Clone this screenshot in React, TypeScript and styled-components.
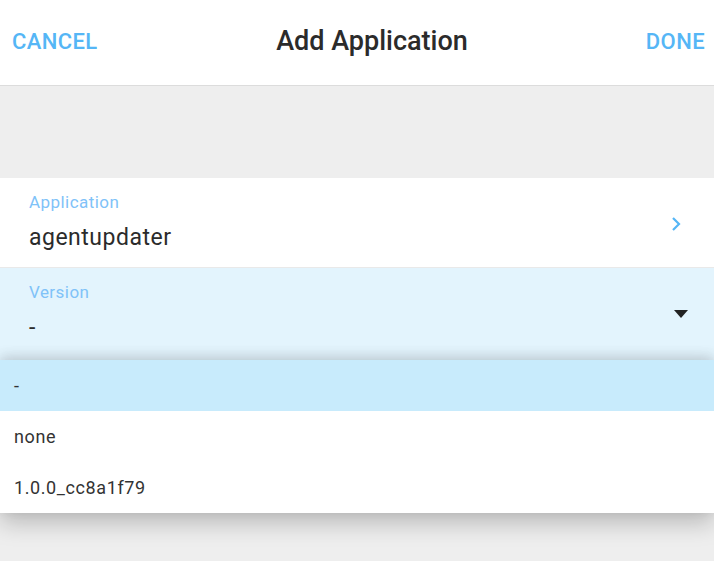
import React from "react";
import styled, { createGlobalStyle } from "styled-components";

const Global = createGlobalStyle`
  html, body { margin: 0; padding: 0; }
  body {
    background: #eeeeee;
    font-family: Roboto, "Noto Sans", "Liberation Sans", sans-serif;
    -webkit-font-smoothing: antialiased;
  }
`;

const Page = styled.div`
  min-height: 561px;
  background: #eeeeee;
  display: flex;
  flex-direction: column;
`;

const Header = styled.header`
  height: 86px;
  background: #ffffff;
  border-bottom: 1px solid #dcdcdc;
  display: flex;
  align-items: center;
  justify-content: space-between;
  padding: 0 9px 3px 12px;
  box-sizing: border-box;
`;

const HeaderButton = styled.button<{ $align: "left" | "right"; $w: number }>`
  border: 0;
  background: transparent;
  padding: 0;
  font-family: inherit;
  font-size: 22px;
  font-weight: 500;
  color: #55b6f6;
  letter-spacing: 0.4px;
  cursor: pointer;
  width: ${(p) => p.$w}px;
  text-align: ${(p) => p.$align};
`;

const Title = styled.h1`
  margin: 0;
  font-size: 27px;
  font-weight: 500;
  color: #2b2b2b;
`;

const Spacer = styled.div`
  height: 92px;
`;

const FieldRow = styled.div<{ $active?: boolean }>`
  position: relative;
  height: ${(p) => (p.$active ? "92px" : "90px")};
  background: ${(p) => (p.$active ? "#e3f4fd" : "#ffffff")};
  border-bottom: ${(p) => (p.$active ? "0" : "1px solid #e9e9e9")};
  display: flex;
  align-items: flex-start;
  justify-content: space-between;
  padding: 14px 32px 0 29px;
  box-sizing: border-box;
`;

const FieldText = styled.div`
  display: flex;
  flex-direction: column;
`;

const Label = styled.span`
  font-size: 17px;
  line-height: 21px;
  letter-spacing: 0.45px;
  color: #7fc2f8;
`;

const Value = styled.span`
  margin-top: 11px;
  font-size: 23px;
  line-height: 28px;
  letter-spacing: 0.5px;
  color: #2b2b2b;
`;

const IconSlot = styled.div<{ $top: number; $right: number }>`
  margin-top: ${(p) => p.$top}px;
  margin-right: ${(p) => p.$right}px;
  display: flex;
`;

const Menu = styled.ul`
  position: absolute;
  left: 0;
  right: 0;
  top: 100%;
  margin: 0;
  padding: 0;
  list-style: none;
  background: #ffffff;
  box-shadow: 0 10px 22px rgba(0, 0, 0, 0.22), 0 -4px 12px rgba(0, 0, 0, 0.12);
  z-index: 2;
`;

const MenuItem = styled.li<{ $selected?: boolean; $h: number }>`
  height: ${(p) => p.$h}px;
  display: flex;
  align-items: center;
  padding-left: 14px;
  font-size: 18px;
  letter-spacing: 0.6px;
  color: #333333;
  background: ${(p) => (p.$selected ? "#c8ebfc" : "#ffffff")};
`;

export default function App() {
  return (
    <Page>
      <Global />
      <Header>
        <HeaderButton $align="left" $w={137}>CANCEL</HeaderButton>
        <Title>Add Application</Title>
        <HeaderButton $align="right" $w={110}>DONE</HeaderButton>
      </Header>
      <Spacer />
      <FieldRow>
        <FieldText>
          <Label>Application</Label>
          <Value>agentupdater</Value>
        </FieldText>
        <IconSlot $top={24} $right={0}>
          <svg width="12" height="16" viewBox="0 0 12 16">
            <path d="M3 2 L9 8 L3 14" fill="none" stroke="#55b6f6" strokeWidth="2.2" />
          </svg>
        </IconSlot>
      </FieldRow>
      <FieldRow $active>
        <FieldText>
          <Label>Version</Label>
          <Value>-</Value>
        </FieldText>
        <IconSlot $top={28} $right={-6}>
          <svg width="14" height="8" viewBox="0 0 14 8">
            <path d="M0 0 L14 0 L7 8 Z" fill="#222222" />
          </svg>
        </IconSlot>
        <Menu>
          <MenuItem $selected $h={51}>-</MenuItem>
          <MenuItem $h={50}>none</MenuItem>
          <MenuItem $h={52}>1.0.0_cc8a1f79</MenuItem>
        </Menu>
      </FieldRow>
    </Page>
  );
}
